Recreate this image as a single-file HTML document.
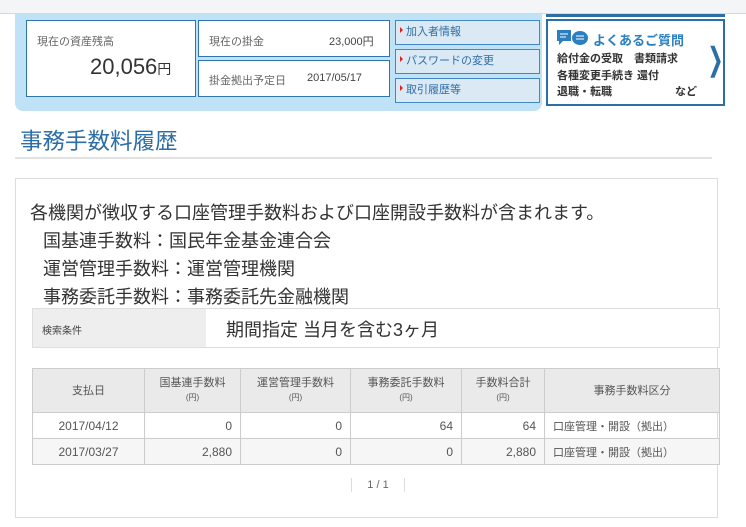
<!DOCTYPE html>
<html><head><meta charset="utf-8"><style>
*{margin:0;padding:0;box-sizing:border-box}
body{width:746px;height:527px;background:#fff;position:relative;overflow:hidden;font-family:"Liberation Sans","Noto Sans CJK JP",sans-serif;color:#333}
.a{position:absolute}
.top{left:0;top:0;width:746px;height:14px;background:#f4f5f7;border-bottom:1px solid #d6d9dc}
.panel{left:15px;top:14px;width:527px;height:97px;background:#bfe2f7;border-radius:0 0 8px 8px}
.box{background:#fff;border:1px solid #2f75ad}
.lnk{background:#dbe9f4;border:1px solid #4286c2;color:#2f6ea6;font-size:11px;padding-left:10px;line-height:23px}
.lnk:before{content:"";position:absolute;left:4px;top:6px;border-left:3px solid #d22;border-top:3px solid transparent;border-bottom:3px solid transparent}
.faq{left:546px;top:19px;width:179px;height:87px;border:2px solid #2b6fa6;background:#fff}
.lbl{font-size:11px;color:#666}
table{border-collapse:collapse;position:absolute;left:32px;top:368px;width:688px;font-size:12px;color:#555}
td,th{border:1px solid #ccc;font-weight:normal}
th{background:#eaeaea;height:44px;font-size:11px;line-height:14px}
th small{font-size:8px}
td{height:26px;text-align:right;padding-right:8px}
td.c{text-align:center;padding:0}
td.l{text-align:left;padding-left:8px;font-size:11px}
tr.g td{background:#f6f6f6}
.big{font-size:18px;color:#333}
</style></head><body>
<div class="a top"></div>
<div class="a panel"></div>
<div class="a box" style="left:26px;top:20px;width:170px;height:77px"></div>
<div class="a lbl" style="left:37px;top:33px">現在の資産残高</div>
<div class="a" style="left:90px;top:54px;font-size:22px;color:#333">20,056<span style="font-size:14px">円</span></div>
<div class="a box" style="left:198px;top:20px;width:192px;height:37px"></div>
<div class="a lbl" style="left:209px;top:33px">現在の掛金</div>
<div class="a lbl" style="left:329px;top:33px;color:#444">23,000円</div>
<div class="a box" style="left:198px;top:60px;width:192px;height:37px"></div>
<div class="a lbl" style="left:209px;top:72px">掛金拠出予定日</div>
<div class="a lbl" style="left:307px;top:72px;color:#444">2017/05/17</div>
<div class="a lnk" style="left:395px;top:20px;width:145px;height:25px">加入者情報</div>
<div class="a lnk" style="left:395px;top:49px;width:145px;height:25px">パスワードの変更</div>
<div class="a lnk" style="left:395px;top:78px;width:145px;height:25px">取引履歴等</div>
<div class="a" style="left:546px;top:14px;width:179px;height:3px;background:#2b6fa6"></div>
<div class="a faq"></div>
<svg class="a" style="left:557px;top:30px" width="34" height="18"><rect x="0" y="0" width="14" height="11" fill="#2b7fc0"/><path d="M2 11 L2 15 L6 11Z" fill="#2b7fc0"/><line x1="3" y1="4" x2="11" y2="4" stroke="#fff"/><line x1="3" y1="7" x2="9" y2="7" stroke="#fff"/><ellipse cx="23" cy="8" rx="8" ry="7" fill="#2b7fc0"/><line x1="19" y1="6" x2="27" y2="6" stroke="#fff"/><line x1="19" y1="9" x2="27" y2="9" stroke="#fff"/></svg>
<div class="a" style="left:593px;top:30px;font-size:13px;font-weight:bold;color:#2b7fc0">よくあるご質問</div>
<div class="a" style="left:557px;top:51px;font-size:11px;line-height:16.5px;color:#333;font-weight:bold;width:140px">給付金の受取　書類請求<br>各種変更手続き 還付<br>退職・転職<span style="float:right">など</span></div>
<div class="a" style="left:702px;top:40px;font-size:32px;color:#2b6fa6;transform:scaleX(.6)">❯</div>
<div class="a" style="left:20px;top:124px;font-size:22.5px;color:#2d6ea6">事務手数料履歴</div>
<div class="a" style="left:15px;top:157px;width:697px;height:2px;background:#e2e2e2"></div>
<div class="a" style="left:15px;top:178px;width:703px;height:340px;border:1px solid #ddd"></div>
<div class="a big" style="left:30px;top:199px">各機関が徴収する口座管理手数料および口座開設手数料が含まれます。</div>
<div class="a big" style="left:43px;top:227px">国基連手数料：国民年金基金連合会</div>
<div class="a big" style="left:43px;top:255px">運営管理手数料：運営管理機関</div>
<div class="a big" style="left:43px;top:283px">事務委託手数料：事務委託先金融機関</div>
<div class="a" style="left:32px;top:308px;width:688px;height:40px;border:1px solid #ddd;background:#fff"></div>
<div class="a" style="left:33px;top:309px;width:173px;height:38px;background:#eee"></div>
<div class="a" style="left:42px;top:322px;font-size:10px;color:#444">検索条件</div>
<div class="a" style="left:226px;top:316px;font-size:18px;color:#333">期間指定  当月を含む3ヶ月</div>
<table>
<tr><th style="width:112px">支払日</th><th style="width:96px">国基連手数料<br><small>(円)</small></th><th style="width:110px">運営管理手数料<br><small>(円)</small></th><th style="width:111px">事務委託手数料<br><small>(円)</small></th><th style="width:83px">手数料合計<br><small>(円)</small></th><th>事務手数料区分</th></tr>
<tr><td class="c">2017/04/12</td><td>0</td><td>0</td><td>64</td><td>64</td><td class="l">口座管理・開設（拠出）</td></tr>
<tr class="g"><td class="c">2017/03/27</td><td>2,880</td><td>0</td><td>0</td><td>2,880</td><td class="l">口座管理・開設（拠出）</td></tr>
</table>
<div class="a" style="left:351px;top:478px;width:54px;height:14px;border-left:1px solid #ddd;border-right:1px solid #ddd;text-align:center;font-size:11px;color:#666;line-height:14px">1 / 1</div>
</body></html>
